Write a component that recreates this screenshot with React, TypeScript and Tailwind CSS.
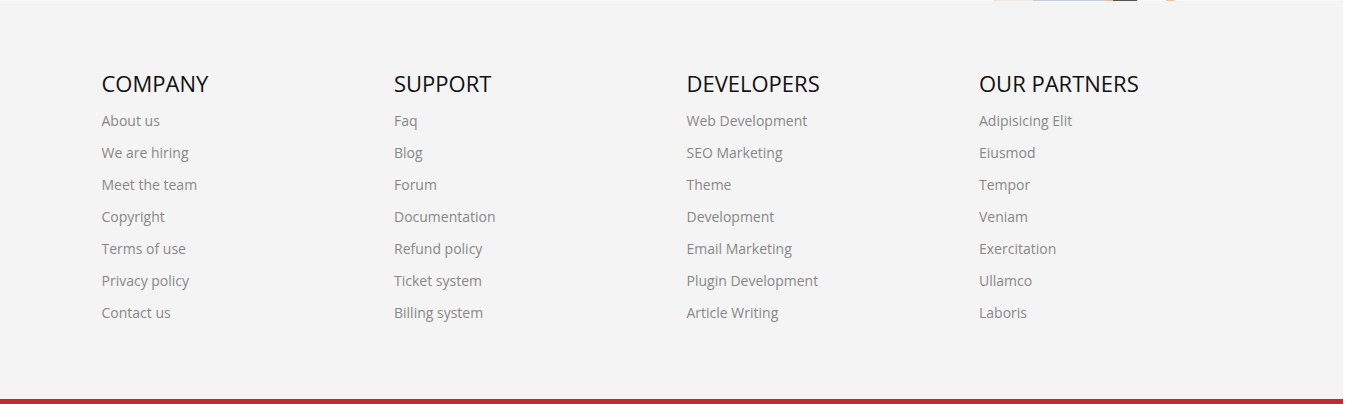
import React from "react";

const cols = [
  { title: "COMPANY", items: ["About us", "We are hiring", "Meet the team", "Copyright", "Terms of use", "Privacy policy", "Contact us"] },
  { title: "SUPPORT", items: ["Faq", "Blog", "Forum", "Documentation", "Refund policy", "Ticket system", "Billing system"] },
  { title: "DEVELOPERS", items: ["Web Development", "SEO Marketing", "Theme", "Development", "Email Marketing", "Plugin Development", "Article Writing"] },
  { title: "OUR PARTNERS", items: ["Adipisicing Elit", "Eiusmod", "Tempor", "Veniam", "Exercitation", "Ullamco", "Laboris"] },
];

export default function App() {
  return (
    <div className="flex w-[1348px] h-[404px] bg-white" style={{ fontFamily: '"Open Sans", sans-serif' }}>
      <div className="flex flex-col w-[1343px] h-[404px] bg-[#f4f4f4]">
        <div className="flex h-px w-full bg-[#fafafa]">
          <div className="w-[993px]" />
          <div className="w-[40px] bg-[#ece9e6]" />
          <div className="w-[72px] bg-[#c9cfdc]" />
          <div className="w-[8px] bg-[#e8b9a0]" />
          <div className="w-[24px] bg-[#555]" />
          <div className="w-[29px]" />
          <div className="w-[9px] bg-[#f0c2a8]" />
        </div>
        <div className="flex-1 flex justify-center">
          <div className="w-[1170px] grid grid-cols-4 pt-[68px]">
            {cols.map((c) => (
              <div key={c.title} className="px-[15px]">
                <h3 className="text-[22px] leading-[28px] text-[#111] font-normal">{c.title}</h3>
                <ul className="mt-[8px] flex flex-col">
                  {c.items.map((it) => (
                    <li key={it} className="text-[14px] leading-[32px] text-[#888]">{it}</li>
                  ))}
                </ul>
              </div>
            ))}
          </div>
        </div>
        <div className="h-[5px] bg-[#c12d2e]" />
      </div>
    </div>
  );
}
